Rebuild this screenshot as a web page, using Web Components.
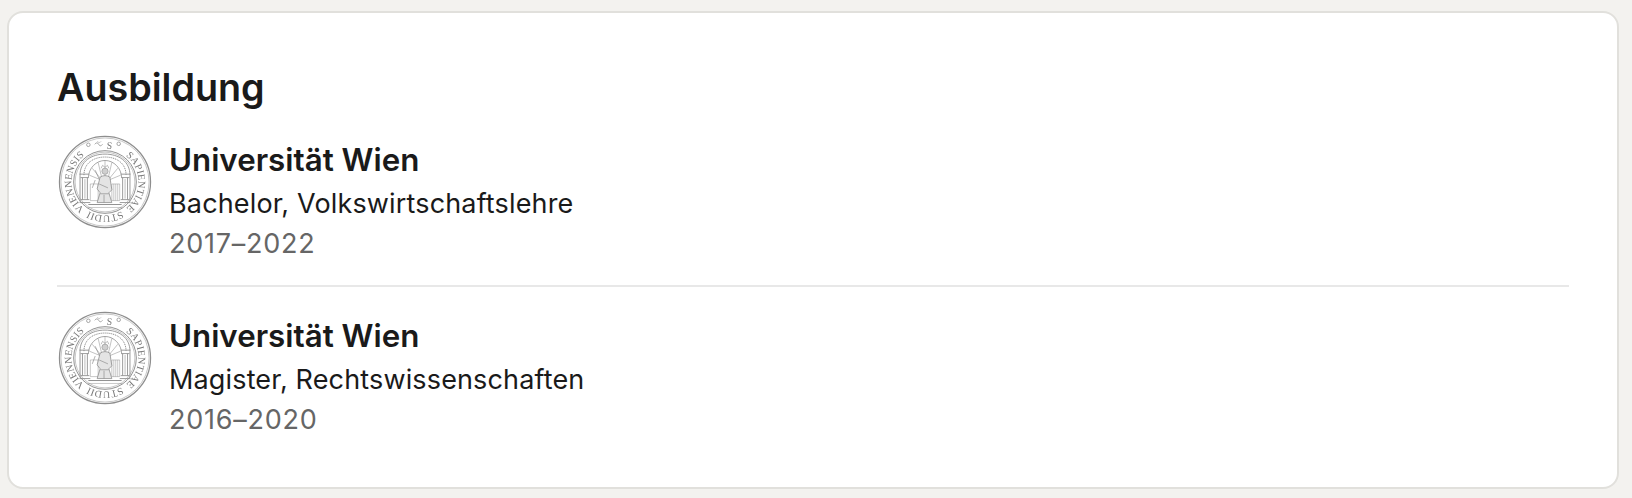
<!DOCTYPE html>
<html><head><meta charset="utf-8"><style>
html,body{margin:0;padding:0;background:#f3f2ef;}
body{padding:11px 13px 9px 7px;font-family:Inter,"Liberation Sans",sans-serif;color:#1a1a1a;}
</style></head><body>
<edu-card heading="Ausbildung">
<edu-item school="Universität Wien" degree="Bachelor, Volkswirtschaftslehre" years="2017–2022"></edu-item>
<edu-item school="Universität Wien" degree="Magister, Rechtswissenschaften" years="2016–2020"></edu-item>
</edu-card>
<script>
class EduCard extends HTMLElement{constructor(){super();this.attachShadow({mode:'open'}).innerHTML=`<style>
:host{display:block;box-sizing:border-box;height:478px;background:#fff;border:2px solid #e1e0dc;border-radius:16px;padding:50px 48px 0 48px;}
h2{margin:0 0 23.5px;font:600 37.7px/48px Inter,"Liberation Sans",sans-serif;color:#1a1a1a;}
.list{display:flex;flex-direction:column;}
::slotted(edu-item:not(:last-child)){border-bottom:2px solid #e8e8e8;margin-bottom:24px;}
</style><h2></h2><div class="list"><slot></slot></div>`;this.shadowRoot.querySelector('h2').textContent=this.getAttribute('heading');}}
class UniSeal extends HTMLElement{constructor(){super();
this.attachShadow({mode:'open'}).innerHTML=`<style>:host{display:block;width:94px;height:94px;flex:none}svg{display:block;filter:blur(.35px)}text{font:400 10.3px "Liberation Serif",serif;fill:#787878;letter-spacing:.2px}</style>
<svg width="94" height="94" viewBox="0 0 96 96" fill="none" stroke="#8e8e8e" stroke-width=".8">
<circle cx="48" cy="48" r="46.500" stroke-width="1.300"/><circle cx="48" cy="48" r="45" stroke-width=".5"/>
<circle cx="48" cy="48" r="32" stroke-width="1"/><circle cx="48" cy="48" r="30.500" stroke-width=".5"/>
<defs>
<path id="t" d="M48 13.800a34.200 34.200 0 1 1 0 68.400a34.200 34.200 0 1 1 0-68.400"/>
<path id="u" d="M48 82.200a34.200 34.200 0 1 1 0-68.400a34.200 34.200 0 1 1 0 68.400"/>
</defs>
<text stroke="none" text-anchor="middle"><textPath href="#t" startOffset="25%">SAPIENTIAE</textPath></text>
<text stroke="none" text-anchor="middle"><textPath href="#t" startOffset="50%">STUDII</textPath></text>
<text stroke="none" text-anchor="middle"><textPath href="#t" startOffset="75%">VIENNENSIS</textPath></text>
<text stroke="none" text-anchor="middle"><textPath href="#u" startOffset="52%">S</textPath></text>
<g stroke-width=".8">
<path d="M37.500 9.500c1.500-2 3-2 4 0s2.500 2 4 0"/><path d="M40 6.500c1.500 1.500 3 1.500 4 0" stroke-width=".5"/>
<circle cx="31" cy="10" r="1.800"/><circle cx="62" cy="9" r="1.800"/>
</g>
<path d="M22.500 68V41C22.500 27 34 19.500 48 19.500S73.500 27 73.500 41v27" stroke-width=".9"/>
<path d="M26.500 41c0-12 9.500-18.500 21.500-18.500S69.500 29 69.500 41" stroke-width="1" stroke-dasharray="1.200 .8"/>
<path d="M31 44c0-10 8-18 17-18s17 8 17 18" stroke-width=".8"/>
<path d="M48 26v19M41 28l4 17M55 28l-4 17M35 34l9 11M61 34l-9 11M32 41l12 5M64 41l-12 5" stroke-width=".55"/>
<g stroke-width=".9">
<path d="M22 40h10M64 40h10M23 43.500h8M65 43.500h8M25 43.500V66M30 43.500V66M66 43.500V66M71 43.500V66M23 66h9M64 66h9M22 69h11M63 69h11"/>
<path d="M27.500 45v20M68.500 45v20" stroke-width=".6"/>
</g>
<path d="M55 50h8v17h-8zM57 50v17M59 50v17M61 50v17" stroke-width=".5"/>
<path d="M33 50h8v17h-8z" stroke-width=".5"/>
<circle cx="48" cy="37" r="3.200" fill="#cfcfcf" stroke-width=".6"/>
<path d="M44 34l1.500-3 2.500 2 2.500-2 1.500 3" stroke-width=".6"/>
<path d="M43 43c3-2 7-2 10 0l2 13-3 3 3 10H40l3-10-3-4z" fill="#e4e4e4" stroke="#7f7f7f" stroke-width=".7"/>
<path d="M38 36l4 9M42 50l9 4M43 60h9M47 61v8M38 46l-3 8" stroke-width=".7"/>
<path d="M31 71h34" stroke-width="1"/><path d="M30 74h36" stroke-width=".5"/>
</svg>`;}}
class EduItem extends HTMLElement{constructor(){super();this.attachShadow({mode:'open'}).innerHTML=`<style>
:host{display:flex;gap:17px;align-items:flex-start;padding-bottom:23px;}
uni-seal{margin-left:1px}
.t{display:flex;flex-direction:column;padding-top:5px}
.s{font:600 31.3px/40px Inter,"Liberation Sans",sans-serif;color:#1a1a1a;margin-bottom:6px}
.d{font:400 27px/36px Inter,"Liberation Sans",sans-serif;color:#1a1a1a;margin-bottom:4px;letter-spacing:.15px}
.y{font:400 27px/36px Inter,"Liberation Sans",sans-serif;color:#666;letter-spacing:.75px}
</style><uni-seal></uni-seal><div class="t"><div class="s"></div><div class="d"></div><div class="y"></div></div>`;
const r=this.shadowRoot;r.querySelector('.s').textContent=this.getAttribute('school');r.querySelector('.d').textContent=this.getAttribute('degree');r.querySelector('.y').textContent=this.getAttribute('years');}}
customElements.define('uni-seal',UniSeal);customElements.define('edu-item',EduItem);customElements.define('edu-card',EduCard);
</script></body></html>
